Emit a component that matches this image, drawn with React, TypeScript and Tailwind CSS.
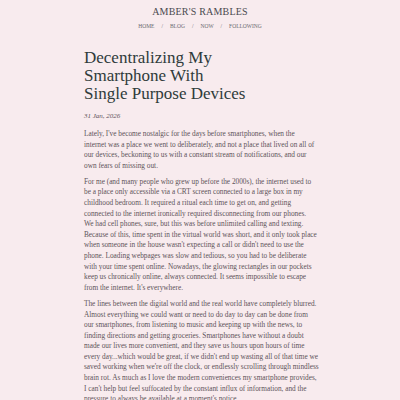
import React from "react";

const P1 = [
  "Lately, I've become nostalgic for the days before smartphones, when the",
  "internet was a place we went to deliberately, and not a place that lived on all of",
  "our devices, beckoning to us with a constant stream of notifications, and our",
  "own fears of missing out.",
];
const P2 = [
  "For me (and many people who grew up before the 2000s), the internet used to",
  "be a place only accessible via a CRT screen connected to a large box in my",
  "childhood bedroom. It required a ritual each time to get on, and getting",
  "connected to the internet ironically required disconnecting from our phones.",
  "We had cell phones, sure, but this was before unlimited calling and texting.",
  "Because of this, time spent in the virtual world was short, and it only took place",
  "when someone in the house wasn't expecting a call or didn't need to use the",
  "phone. Loading webpages was slow and tedious, so you had to be deliberate",
  "with your time spent online. Nowadays, the glowing rectangles in our pockets",
  "keep us chronically online, always connected. It seems impossible to escape",
  "from the internet. It's everywhere.",
];
const P3 = [
  "The lines between the digital world and the real world have completely blurred.",
  "Almost everything we could want or need to do day to day can be done from",
  "our smartphones, from listening to music and keeping up with the news, to",
  "finding directions and getting groceries. Smartphones have without a doubt",
  "made our lives more convenient, and they save us hours upon hours of time",
  "every day...which would be great, if we didn't end up wasting all of that time we",
  "saved working when we're off the clock, or endlessly scrolling through mindless",
  "brain rot. As much as I love the modern conveniences my smartphone provides,",
  "I can't help but feel suffocated by the constant influx of information, and the",
  "pressure to always be available at a moment's notice.",
];

function Para({ lines }: { lines: string[] }) {
  return (
    <p className="mb-[5.5px] whitespace-nowrap">
      {lines.map((l, i) => (
        <span key={i} className="block">
          {l}
        </span>
      ))}
    </p>
  );
}

export default function App() {
  return (
    <div
      className="min-h-[400px] w-full overflow-hidden bg-[#f8ebee] text-[#5e5459]"
      style={{ fontFamily: '"Liberation Serif", "Times New Roman", serif' }}
    >
      <header className="flex flex-col items-center pt-[6px]">
        <div className="text-[10px] leading-[12px] tracking-[0.2px] text-[#4a4a4f]">
          AMBER'S RAMBLES
        </div>
        <nav className="mt-[4px] flex items-center gap-[7px] text-[5.5px] leading-[8px] text-[#6a6a70]">
          <span>HOME</span>
          <span>/</span>
          <span>BLOG</span>
          <span>/</span>
          <span>NOW</span>
          <span>/</span>
          <span>FOLLOWING</span>
        </nav>
      </header>
      <main className="mx-auto w-[232px] pt-[19px]">
        <h1 className="text-[17px] leading-[18px] text-[#2f3b3b]">
          Decentralizing My
          <br />
          Smartphone With
          <br />
          Single Purpose Devices
        </h1>
        <div className="mt-[8px] text-[7px] italic leading-[10px] text-[#5e5459]">
          31 Jan, 2026
        </div>
        <div className="mt-[8px] text-[7.3px] leading-[10.6px]">
          <Para lines={P1} />
          <Para lines={P2} />
          <Para lines={P3} />
        </div>
      </main>
    </div>
  );
}
